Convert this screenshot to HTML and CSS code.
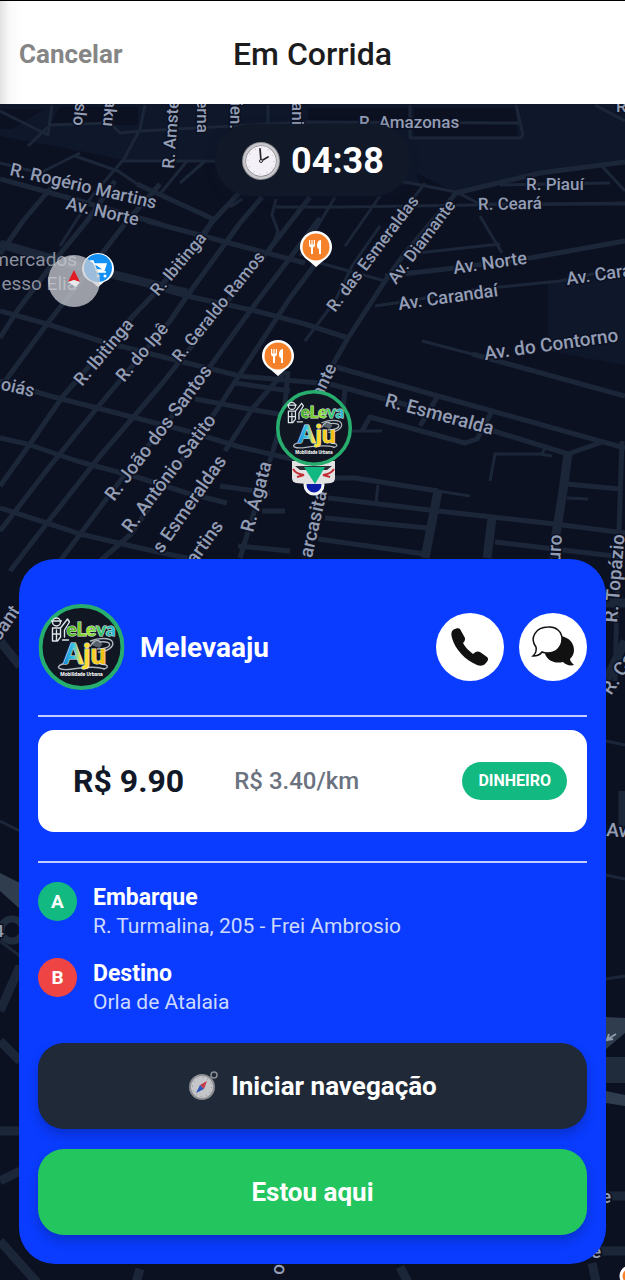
FILE: index.html
```html
<!DOCTYPE html>
<html lang="pt-BR">
<head>
    <meta charset="UTF-8">
    <meta name="viewport" content="width=device-width, initial-scale=1.0">
    <title>Em Corrida</title>
    <link rel="stylesheet" href="styles.css">
</head>
<body>

    <header class="topbar">
        <button class="cancel-btn" type="button">Cancelar</button>
        <h1>Em Corrida</h1>
    </header>

    <main class="ride">
        <!-- Mapa -->
        <svg class="map" viewBox="0 103 625 1177" preserveAspectRatio="xMidYMin slice" aria-label="Mapa">
            <defs>
                <linearGradient id="g-leva" x1="0" x2="1" y1="0" y2="0">
                    <stop offset="0" stop-color="#3fae2a"/>
                    <stop offset="0.45" stop-color="#9be22d"/>
                    <stop offset="0.7" stop-color="#35c46a"/>
                    <stop offset="1" stop-color="#27b5e8"/>
                </linearGradient>
                <linearGradient id="g-aju" x1="0" x2="1" y1="0" y2="0">
                    <stop offset="0" stop-color="#1583d6"/>
                    <stop offset="0.25" stop-color="#36c3e6"/>
                    <stop offset="0.42" stop-color="#ffe63a"/>
                    <stop offset="1" stop-color="#f2b90c"/>
                </linearGradient>
                <symbol id="logo" viewBox="0 0 86 86">
                    <circle cx="43" cy="43" r="41" fill="#101722" stroke="#27ae6e" stroke-width="4"/>
                    <g fill="none" stroke="#dfe5ea" stroke-width="1.4" stroke-linecap="round" stroke-linejoin="round">
                        <circle cx="18" cy="18" r="4"/>
                        <path d="M13 17h10M14 24h8M14 24v13M18 26v11M14 37h4M22 24v9l-3 4M22 24l7-9 2 3-5 8v7M14 30h8M24 36h6"/>
                        <path d="M52 37c7-3 20-4 22 1s-6 10-14 10M54 40c7-3 16-3 17 0s-5 5-12 5" stroke="#aeb6be"/>
                        <path d="M52 42c2-5 7-7 10-4M24 60c-8 3-4 7 10 5s24-3 32 0M62 60c8 0 9 4 3 5" stroke="#aeb6be"/>
                    </g>
                    <path d="M53 41l5-4 6 3-3 4z" fill="#58626d"/>
                    <text class="logo-top" x="28" y="32" fill="url(#g-leva)">eLeva</text>
                    <text class="logo-mid" x="25" y="60" fill="url(#g-aju)">Aju</text>
                    <text class="logo-low" x="43" y="72">Mobilidade Urbana</text>
                </symbol>
                <symbol id="food" viewBox="0 0 34 38">
                    <path d="M17 37l-7-6C5 28 1 23 1 17a16 16 0 0 1 32 0c0 6-4 11-9 14z" fill="#fff"/>
                    <circle cx="17" cy="17" r="13.5" fill="#f5822a"/>
                    <path d="M10 10v5q0 2 2 2.500V24h2v-6.500q2-.5 2-2.500v-5h-1.200v4.500h-1.200V10h-1.200v4.500h-1.200V10zM22 24V10c-3 0-4 3-4 5.500s1 3.500 2 3.500v5z" fill="#fff"/>
                </symbol>
            </defs>

            <rect class="land" x="-400" y="103" width="1425" height="1177"/>
            <path class="area" d="M0 103H340V124L405 166L456 192L530 172L625 160V103zM0 135L80 150L130 160L220 158L340 180L420 185L400 103H0z"/>
            <path class="area" d="M548 282L625 272V364L548 350z"/>
            <g class="block">
                <path d="M0 108H44L12 128H0zM60 106H138V124H50zM308 107H412V121H308zM414 107H516V121H414zM414 123H516L518 136L414 137z"/>
            </g>

            <!-- ruas -->
            <g class="road thin">
                <path d="M0 110L48 134L52 104M48 124L110 122L120 132L140 130L305 121L520 122"/>
                <path d="M145 104L140 128L124 158L92 195L60 245"/>
                <path d="M28 145L48 126M123 160H240M75 155L118 170L137 183"/>
                <path d="M0 162L40 172L80 152M268 104V122M410 104V137L520 137L523 134L516 104M595 104L625 120"/>
                <path d="M187 160L160 193M205 160L180 182M242 198L230 206"/>
                <path d="M276 198L272 214L278 230L270 250M276 206H340L625 202M335 196L300 255M380 195L345 245M425 182L400 215"/>
                <path d="M400 180L456 191L480 203H625M500 184L610 182M600 163L625 190M480 215L502 252M408 253L500 243"/>
                <path d="M375 305L395 302L480 288L560 280L625 266"/>
                <path d="M305 340L335 300L352 265L380 225M320 262L385 280"/>
                <path d="M422 340L472 353M332 430H382M490 480L495 453H540L552 455M541 454L546 446M567 497L588 498M438 490L470 495M378 484L376 502"/>
                <path d="M606 740L625 744M606 874L625 878M606 978L625 975M0 820L20 830M0 940L20 955"/>
            </g>
            <g class="road">
                <path d="M0 243L127 278L187 295L256 310L305 323L348 337"/>
                <path d="M0 310L47 323L100 340L187 362L240 375L330 383L400 402L500 432L568 453L602 441"/>
                <path d="M0 380L50 395L97 407L187 430L240 446L300 460"/>
                <path d="M0 437L27 443L77 460L140 477L187 492L227 502"/>
                <path d="M0 507L47 522L80 533L140 547L200 560"/>
                <path d="M147 220L233 243L305 262"/>
                <path d="M0 178L80 200L160 223M137 183L213 218L203 236"/>
                <path d="M0 253L23 220L55 182"/>
                <path d="M0 337L17 310L60 253L87 220L115 180"/>
                <path d="M0 387L47 323L83 277L127 220L160 183"/>
                <path d="M0 485L30 443L63 395L133 315L157 290L213 220L250 180"/>
                <path d="M0 530L50 465L97 407L170 320L187 295L240 222L262 196"/>
                <path d="M10 570L47 522L100 455L160 385L180 360L268 250L310 196"/>
                <path d="M60 560L120 480L180 405L214 360L250 310L320 217"/>
                <path d="M100 560L131 533L218 407L240 373L290 297L325 250"/>
                <path d="M195 398L260 410L285 414M235 382L290 390M225 450L253 407L285 370M288 370L284 414L262 485L240 557M238 545L290 550M262 510H285M220 485L270 492"/>
                <path d="M348 337L332 365L320 392M348 337L385 280L405 252L456 192L540 172L625 161"/>
                <path d="M332 365L438 395L492 410L625 447"/>
                <path d="M472 353L625 395M385 275L455 267L530 257L625 240"/>
                <path d="M438 395L420 425M492 410L477 438L465 442L370 416L362 430M345 388L342 418"/>
                <path d="M325 477L355 477L438 490M328 497L438 510L555 523L625 532M325 517L428 527M318 538L425 553M495 541L622 556"/>
                <path d="M567 483L620 488M622 440L618 560L615 680"/>
            </g>
            <g class="road wide">
                <path d="M568 453L563 490L555 540L553 560M438 490L425 557M492 517L487 557"/>
                <path d="M0 243L60 260L187 292M0 640L20 665M606 602H625M606 680L625 640M0 1010L20 965M623 790V830"/>
                <path d="M606 1195H625M585 1250H625M592 1262L597 1285"/>
                <path d="M0 1040L20 1060M0 1130H20M0 1180L20 1170M0 1240L40 1285M140 1268L135 1285M400 1266L410 1285"/>
            </g>
            <path class="avenue" d="M0 872L20 882V908L0 890zM606 1016L625 1017V1032L606 1048zM606 1090L625 1094V1105L606 1102z"/>
            <path class="avenue dim" d="M606 1056H625V1082H606z"/>
            <path d="M616 1033l-8 5m1-5-2 6 6-1" fill="none" stroke="#8d98ab" stroke-width="2"/>
            <circle cx="12" cy="929" r="11" fill="none" stroke="#202d3e" stroke-width="7"/>
            <circle cx="630" cy="1275" r="9" fill="#f5822a" stroke="#fff" stroke-width="3"/>

            <!-- nomes das ruas -->
            <g class="label">
                <text transform="translate(9 174) rotate(13)">R. Rogério Martins</text>
                <text transform="translate(65 208) rotate(13)">Av. Norte</text>
                <text class="small" transform="translate(174 168) rotate(-86)">R. Amster</text>
                <text class="small end" transform="translate(73 124) rotate(96)">slo</text>
                <text class="small end" transform="translate(103 125) rotate(95)">aku</text>
                <text class="small end" transform="translate(197 132) rotate(90)">erna</text>
                <text class="small end" transform="translate(230 128) rotate(91)">ien.</text>
                <text class="small end" transform="translate(292 124) rotate(90)">ani</text>
                <text class="small" x="359" y="127">R. Amazonas</text>
                <text class="small" x="616" y="111">R</text>
                <text class="small" x="526" y="189">R. Piauí</text>
                <text class="small" transform="translate(478 209) rotate(-1)">R. Ceará</text>
                <text class="small" transform="translate(335 312) rotate(-53)">R. das Esmeraldas</text>
                <text class="small" transform="translate(396 284) rotate(-53)">Av. Diamante</text>
                <text transform="translate(454 273) rotate(-8)">Av. Norte</text>
                <text transform="translate(399 309) rotate(-8)">Av. Carandaí</text>
                <text transform="translate(567 284) rotate(-8)">Av. Cara</text>
                <text class="big" transform="translate(485 359) rotate(-8)">Av. do Contorno</text>
                <text class="big" transform="translate(384 405) rotate(15)">R. Esmeralda</text>
                <text class="small" transform="translate(158 296) rotate(-50)">R. Ibitinga</text>
                <text transform="translate(82 386) rotate(-50)">R. Ibitinga</text>
                <text transform="translate(124 382) rotate(-50)">R. do Ipê</text>
                <text class="small" transform="translate(180 362) rotate(-51)">R. Geraldo Ramos</text>
                <text class="big" transform="translate(114 501) rotate(-53)">R. João dos Santos</text>
                <text class="big" transform="translate(131 533) rotate(-53)">R. Antônio Satito</text>
                <text class="big end" transform="translate(227 460) rotate(-55)">s Esmeraldas</text>
                <text class="big end" transform="translate(224 525) rotate(-54)">artins</text>
                <text class="big" transform="translate(253 532) rotate(-75)">R. Ágata</text>
                <text class="big end" transform="translate(327 491) rotate(-77)">arcasita</text>
                <text class="end" transform="translate(337 366) rotate(-64)">ante</text>
                <text class="end" transform="translate(33 396) rotate(13)">oiás</text>
                <text class="big end" transform="translate(562 534) rotate(-86)">uro</text>
                <text class="big" transform="translate(617 622) rotate(-85)">R. Topázio</text>
                <text class="big" transform="translate(611 695) rotate(-57)">R. Ca</text>
                <text class="big end" transform="translate(21 610) rotate(-55)">Sant</text>
                <text class="big" transform="translate(606 835) rotate(4)">Av</text>
                <text class="big" x="601" y="1202">e</text>
                <text class="big" x="591" y="1257">e</text>
                <text class="big" transform="translate(284 1274) rotate(-88)">o</text>
                <text class="small end" x="4" y="936">4</text>
            </g>
            <g class="place">
                <text x="77" y="265">mercados</text>
                <text x="77" y="289">esso Elia</text>
            </g>

            <!-- marcadores -->
            <use href="#food" x="299" y="229" width="34" height="38"/>
            <use href="#food" x="261" y="338" width="34" height="38"/>
            <path d="M98 286l-6-5c-6-2-10-7-10-13a16 16 0 0 1 32 0c0 6-4 11-10 13z" fill="#fff"/>
            <circle cx="98" cy="267" r="14" fill="#1490f5"/>
            <path d="M90 260h3l4 11h9M94 263h12l-2 6h-8" fill="#fff" stroke="#fff" stroke-width="1.500"/>
            <circle cx="98" cy="275" r="1.500" fill="#fff"/>
            <circle cx="105" cy="275" r="1.500" fill="#fff"/>
            <circle cx="74" cy="280" r="26" fill="#c9ccd2" opacity="0.75"/>
            <path d="M74 269l6 12-6-2-6 2z" fill="#e31b23"/>
            <path d="M68 281l6-2 6 2-4 5z" fill="#e9e9ec"/>

            <circle cx="314" cy="484" r="9" fill="#0c1ba8" stroke="#f2f3f5" stroke-width="3"/>
            <path d="M292 460h43v17q0 4-4 5l-10 1h-14l-11-1q-4-1-4-5z" fill="#e3e2e2"/>
            <path d="M295 465h37l-5 4h-27z" fill="#2b2f35"/>
            <path d="M293 468q3 5 11 6l-7 2M334 468q-3 5-11 6l7 2" fill="none" stroke="#c22d35" stroke-width="2"/>
            <path d="M304 466h21l-10 17z" fill="#10b981"/>
            <use href="#logo" x="276" y="389" width="76" height="76"/>
        </svg>

        <!-- Tempo de corrida -->
        <div class="timer">
            <svg width="40" height="40" viewBox="0 0 40 40" aria-hidden="true">
                <circle cx="20" cy="20" r="19" fill="#8f8f94"/>
                <circle cx="20" cy="20" r="18" fill="#c9c9cd"/>
                <circle cx="20" cy="20" r="15.500" fill="#77777c"/>
                <circle cx="20" cy="20" r="15" fill="#f3f0f7"/>
                <circle cx="20" cy="20" r="13" fill="none" stroke="#cfcdd6" stroke-width="1.500" stroke-dasharray="1 5.800"/>
                <path d="M20 20L19 8M20 20l7-4" stroke="#2a2a2e" stroke-width="1.800" stroke-linecap="round"/>
                <circle cx="20" cy="20" r="1.500" fill="#f3f0f7" stroke="#2a2a2e"/>
            </svg>
            <span>04:38</span>
        </div>

        <!-- Dados da corrida -->
        <section class="card">
            <div class="client">
                <svg class="avatar" viewBox="0 0 86 86" role="img" aria-label="Melevaaju"><use href="#logo" width="86" height="86"/></svg>
                <h2>Melevaaju</h2>
                <button class="round-btn" type="button" aria-label="Ligar">
                    <svg width="68" height="68" viewBox="0 0 68 68">
                        <path d="M17 17C20 15 23 15 24 16L29 25C29 27 29 28 27 30C29 34 33 38 37 41C40 38 42 38 44 39L51 44C53 46 52 48 49 51C47 53 44 53 41 52C29 47 19 36 16 25C15 21 15 19 17 17z" fill="#111"/>
                    </svg>
                </button>
                <button class="round-btn" type="button" aria-label="Mensagens">
                    <svg width="68" height="68" viewBox="0 0 68 68">
                        <path d="M41 23C50 24 55 30 55 37C55 40 54 43 51 46C51 48 53 50 55 52C51 53 47 52 44 49C36 51 29 48 26 41z" fill="#111"/>
                        <path d="M29 14C37 13 43 19 43 26C43 34 37 40 29 40C27 40 25 40 23 39C21 42 18 43 14 43C17 40 18 38 17 34C10 25 17 14 29 14z" fill="#fff" stroke="#111" stroke-width="1.500"/>
                    </svg>
                </button>
            </div>

            <div class="fare">
                <strong>R$ 9.90</strong>
                <span class="per-km">R$ 3.40/km</span>
                <span class="payment">DINHEIRO</span>
            </div>

            <ul class="stops">
                <li>
                    <span class="dot pickup">A</span>
                    <div>
                        <h3>Embarque</h3>
                        <p>R. Turmalina, 205 - Frei Ambrosio</p>
                    </div>
                </li>
                <li>
                    <span class="dot dropoff">B</span>
                    <div>
                        <h3>Destino</h3>
                        <p>Orla de Atalaia</p>
                    </div>
                </li>
            </ul>

            <div class="actions">
                <button class="nav-btn" type="button">
                    <svg width="30" height="30" viewBox="0 0 30 30" aria-hidden="true">
                        <circle cx="26" cy="4" r="3" fill="none" stroke="#8b8d92" stroke-width="1.500"/>
                        <circle cx="14" cy="16" r="13" fill="#8b8d92"/>
                        <circle cx="14" cy="16" r="11" fill="#c5c6ca"/>
                        <circle cx="14" cy="16" r="9.500" fill="none" stroke="#85878c" stroke-dasharray="1 4"/>
                        <path d="M19 10l-3 8-4-4z" fill="#c63a4b"/>
                        <path d="M8 22l4-8 4 4z" fill="#2c57b8"/>
                    </svg>
                    Iniciar navegação
                </button>
                <button class="here-btn" type="button">Estou aqui</button>
            </div>
        </section>
    </main>

</body>
</html>
```

FILE: styles.css
```css
* {
    box-sizing: border-box;
}

body {
    font-family: Roboto, "Liberation Sans", sans-serif;
    background-color: #0c1122;
    color: white;
    margin: 0;
    min-height: 100vh;
    display: flex;
    flex-direction: column;
}

h1, h2, h3, p, ul {
    margin: 0;
    padding: 0;
}

button {
    font-family: inherit;
    border: none;
    padding: 0;
    cursor: pointer;
}

/* Topo */
.topbar {
    display: grid;
    grid-template-columns: 1fr auto 1fr;
    align-items: center;
    height: 104px;
    padding: 2px 19px 0;
    border-top: 1px solid #000;
    background: linear-gradient(to right, #e2e2e2, #fafafa 10px, #fff 24px);
}

.topbar h1 {
    font-size: 32px;
    font-weight: 500;
    color: #1c1c1e;
}

.cancel-btn {
    justify-self: start;
    background: none;
    color: #858585;
    font-size: 26px;
    font-weight: bold;
}

/* Mapa */
.ride {
    position: relative;
    flex: 1;
    display: flex;
    flex-direction: column;
    padding: 20px 19px 16px;
    overflow: hidden;
}

.map {
    position: absolute;
    inset: 0;
    width: 100%;
    height: 100%;
}

.land {
    fill: #0c1122;
}

.area {
    fill: #0f172a;
}

.block {
    fill: #0c1122;
}

.road {
    fill: none;
    stroke: #1b2638;
    stroke-width: 5;
    stroke-linejoin: round;
}

.road.thin {
    stroke-width: 3;
}

.road.wide {
    stroke-width: 9;
}

.avenue {
    fill: #2f3d4e;
}

.avenue.dim {
    fill: #202c3c;
}

.label {
    font-size: 18px;
    font-weight: 500;
    fill: #939db4;
    stroke: #0c1122;
    stroke-width: 3px;
    paint-order: stroke;
}

.label .small {
    font-size: 17px;
}

.label .big {
    font-size: 19px;
}

.label .end {
    text-anchor: end;
}

.place {
    font-size: 19px;
    fill: #8b909e;
    text-anchor: end;
}

.logo-top, .logo-mid {
    font-family: Lato, sans-serif;
    font-weight: 900;
    stroke: #e8f3ea;
    stroke-width: 1px;
    paint-order: stroke;
}

.logo-top {
    font-size: 19px;
}

.logo-mid {
    font-size: 28px;
}

.logo-low {
    font-size: 5px;
    font-weight: bold;
    fill: #fff;
    text-anchor: middle;
}

.timer {
    position: relative;
    align-self: center;
    display: flex;
    align-items: center;
    gap: 10px;
    height: 72px;
    padding: 2px 26px 0;
    border-radius: 36px;
    background-color: #111827;
    box-shadow: 0 2px 8px rgba(15, 23, 42, 0.5);
    font-size: 36px;
    font-weight: bold;
}

/* Cartao */
.card {
    position: relative;
    margin-top: auto;
    padding: 45px 19px 29px;
    border-radius: 36px;
    background-color: #0a3cff;
}

.client {
    display: flex;
    align-items: center;
    gap: 15px;
    padding-bottom: 25px;
    border-bottom: 2px solid #c3ceff;
}

.avatar {
    width: 87px;
    height: 86px;
}

.client h2 {
    flex: 1;
    font-size: 28px;
    font-weight: bold;
}

.round-btn {
    width: 68px;
    height: 68px;
    border-radius: 50%;
    background-color: #fff;
}

.round-btn svg {
    display: block;
}

.fare {
    display: flex;
    align-items: center;
    height: 102px;
    margin: 13px 0 29px;
    padding: 0 20px 0 35px;
    border-radius: 16px;
    background-color: #fff;
    color: #111827;
}

.fare strong {
    font-size: 32px;
}

.per-km {
    margin-left: 50px;
    font-size: 24px;
    font-weight: 500;
    color: #6b7280;
}

.payment {
    margin-left: auto;
    padding: 0 16px;
    border-radius: 19px;
    background-color: #12b981;
    color: #fff;
    font-size: 16px;
    font-weight: bold;
    line-height: 38px;
}

.stops {
    display: flex;
    flex-direction: column;
    gap: 18px;
    padding-top: 19px;
    border-top: 2px solid #c3ceff;
    list-style: none;
}

.stops li {
    display: flex;
    gap: 16px;
}

.stops div {
    padding-top: 2px;
}

.stops h3, .stops p {
    line-height: 28px;
}

.stops h3 {
    font-size: 23px;
}

.stops p {
    font-size: 21px;
    color: #ccdafe;
}

.dot {
    width: 39px;
    height: 39px;
    border-radius: 50%;
    font-size: 19px;
    font-weight: bold;
    line-height: 39px;
    text-align: center;
}

.pickup {
    background-color: #12b981;
}

.dropoff {
    background-color: #ef4444;
}

.actions {
    display: flex;
    flex-direction: column;
    gap: 20px;
    margin-top: 27px;
}

.actions button {
    display: flex;
    align-items: center;
    justify-content: center;
    gap: 13px;
    height: 86px;
    border-radius: 26px;
    color: #fff;
    font-size: 26px;
    font-weight: bold;
    box-shadow: 0 6px 12px rgba(0, 0, 0, 0.2);
}

.actions .nav-btn {
    background-color: #1f2937;
}

.actions .here-btn {
    background-color: #22c55e;
}
```
